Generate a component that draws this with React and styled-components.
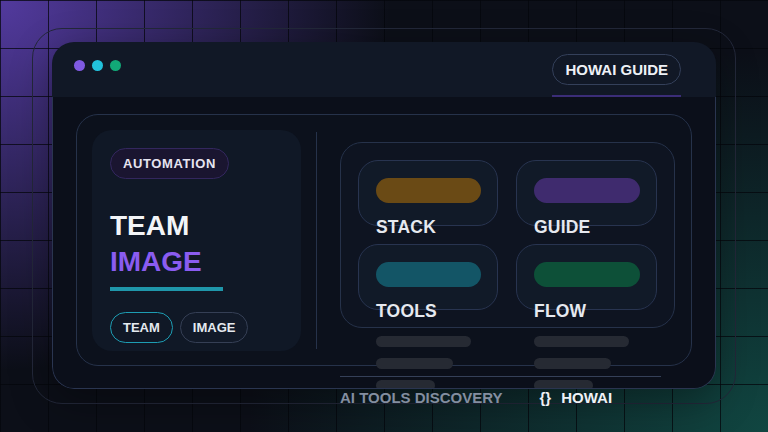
import React from "react";
import styled, { createGlobalStyle } from "styled-components";

const Global = createGlobalStyle`
  html, body { margin: 0; padding: 0; background: #0c0f18; }
  body { font-family: "Liberation Sans", Arial, sans-serif; }
  * { box-sizing: border-box; }
`;

const Stage = styled.div`
  position: relative;
  width: 768px;
  height: 432px;
  overflow: hidden;
  padding: 28px 32px;
  background:
    linear-gradient(to right, rgba(4, 6, 12, 0.75) 1px, transparent 1px) 0 0 / 48px 48px,
    linear-gradient(to bottom, rgba(4, 6, 12, 0.75) 1px, transparent 1px) 0 0 / 48px 48px,
    radial-gradient(ellipse 390px 370px at 0 0, rgba(112, 76, 215, 0.7), rgba(112, 76, 215, 0) 100%),
    radial-gradient(ellipse 520px 380px at 100% 100%, rgba(20, 110, 95, 0.58), rgba(20, 110, 95, 0) 100%),
    #0c0f18;
`;

const Ring = styled.div`
  width: 704px;
  height: 376px;
  border: 1px solid #23283a;
  border-radius: 30px;
  padding: 13px 19px 14px;
`;

const Window = styled.div`
  width: 664px;
  height: 347px;
  border-radius: 22px;
  overflow: hidden;
  display: flex;
  flex-direction: column;
  box-shadow: 0 12px 40px rgba(0, 0, 0, 0.35);
`;

const TopBar = styled.div`
  height: 55px;
  flex: none;
  background: #111826;
  display: flex;
  justify-content: space-between;
  padding: 0 35px 0 22px;
`;

const Dots = styled.div`
  display: flex;
  gap: 7px;
  margin-top: 18px;
`;

const Dot = styled.span`
  width: 11px;
  height: 11px;
  border-radius: 50%;
  background: ${(p) => p.$c};
`;

const TabWrap = styled.div`
  display: flex;
  align-items: flex-start;
  padding-top: 12px;
  border-bottom: 2px solid #3b2d78;
`;

const Pill = styled.span`
  display: inline-flex;
  flex: none;
  align-items: center;
  height: 31px;
  padding: 0 ${(p) => p.$px || 12}px;
  border-radius: 16px;
  border: 1px solid ${(p) => p.$border || "#34405a"};
  background: ${(p) => p.$bg || "transparent"};
  color: ${(p) => p.$color || "#eef1f6"};
  font-size: ${(p) => p.$size || 13}px;
  font-weight: 700;
  letter-spacing: ${(p) => p.$ls || 0}px;
  white-space: nowrap;
  line-height: 1;
`;

const Body = styled.div`
  flex: 1;
  background: #0b0f1a;
  border: 1px solid #2a3550;
  border-top: none;
  border-radius: 0 0 22px 22px;
  padding: 17px 23px 0 23px;
  overflow: hidden;
`;

const Panel = styled.div`
  width: 616px;
  height: 252px;
  border: 1px solid #26324a;
  border-radius: 22px;
  background: #0c111c;
  display: flex;
  padding: 15px 16px 14px 15px;
`;

const LeftCard = styled.div`
  width: 209px;
  height: 221px;
  flex: none;
  border-radius: 20px;
  background: #101826;
  padding: 18px 18px 0;
  display: flex;
  flex-direction: column;
  align-items: flex-start;
  & > * { flex-shrink: 0; }
`;

const Title = styled.h1`
  margin: 29px 0 0;
  font-size: 28px;
  line-height: 36px;
  font-weight: 700;
  color: #f3f5f8;
`;

const Accent = styled.span`
  display: block;
  color: #8a5cf0;
`;

const Underline = styled.div`
  width: 113px;
  height: 4px;
  margin-top: 7px;
  background: #1f96aa;
`;

const PillRow = styled.div`
  display: flex;
  gap: 7px;
  margin-top: 21px;
`;

const Divider = styled.div`
  width: 1px;
  flex: none;
  margin: 2px 23px 2px 15px;
  background: #26324a;
`;

const RightCol = styled.div`
  display: flex;
  flex-direction: column;
  padding-top: 12px;
  & > * { flex-shrink: 0; }
`;

const GridBox = styled.div`
  width: 335px;
  height: 186px;
  border: 1px solid #26324a;
  border-radius: 22px;
  background: #0e1421;
  padding: 17px;
  display: grid;
  grid-template-columns: 140px 141px;
  grid-template-rows: 66px 66px;
  gap: 18px;
`;

const Tile = styled.div`
  border: 1px solid #283450;
  border-radius: 20px;
  background: #111a28;
  padding: 17px 16px 0 17px;
`;

const ColorBar = styled.div`
  height: 25px;
  border-radius: 13px;
  background: ${(p) => p.$c};
`;

const TileLabel = styled.div`
  margin-top: 14px;
  font-size: 17.5px;
  line-height: 20px;
  font-weight: 700;
  letter-spacing: 0.2px;
  color: #e6e9ef;
  white-space: nowrap;
`;

const Lines = styled.div`
  display: grid;
  grid-template-columns: 158px 158px;
  padding: 8px 0 0 36px;
`;

const LineCol = styled.div`
  display: flex;
  flex-direction: column;
  gap: 11px;
`;

const GrayBar = styled.div`
  height: 11px;
  border-radius: 6px;
  background: #262a33;
`;

const Footer = styled.div`
  position: absolute;
  left: 340px;
  top: 376px;
  width: 321px;
  border-top: 1px solid #354058;
  padding-top: 12px;
  display: flex;
  font-size: 15px;
  line-height: 18px;
  font-weight: 700;
`;

const FooterMuted = styled.span`
  color: #838ea0;
  margin-right: 37px;
`;

const FooterBrand = styled.span`
  display: flex;
  gap: 10px;
  color: #eef1f6;
`;

const tiles = [
  { label: "STACK", c: "#6a4a15" },
  { label: "GUIDE", c: "#3f2b6e" },
  { label: "TOOLS", c: "#135566" },
  { label: "FLOW", c: "#0d5038" },
];

const barWidths = [95, 77, 59];

export default function App() {
  return (
    <>
      <Global />
      <Stage>
        <Ring>
          <Window>
            <TopBar>
              <Dots>
                <Dot $c="#7f5ae2" />
                <Dot $c="#22c1dc" />
                <Dot $c="#12a877" />
              </Dots>
              <TabWrap>
                <Pill $size={15} $bg="#111826">HOWAI GUIDE</Pill>
              </TabWrap>
            </TopBar>
            <Body>
              <Panel>
                <LeftCard>
                  <Pill $bg="#1a1530" $border="#33275e" $color="#e6e4f0" $ls={0.6}>
                    AUTOMATION
                  </Pill>
                  <Title>
                    TEAM
                    <Accent>IMAGE</Accent>
                  </Title>
                  <Underline />
                  <PillRow>
                    <Pill $border="#1d9db3" $color="#e4e9ef">TEAM</Pill>
                    <Pill $border="#353f55" $bg="#121a29" $color="#e4e9ef">IMAGE</Pill>
                  </PillRow>
                </LeftCard>
                <Divider />
                <RightCol>
                  <GridBox>
                    {tiles.map((t) => (
                      <Tile key={t.label}>
                        <ColorBar $c={t.c} />
                        <TileLabel>{t.label}</TileLabel>
                      </Tile>
                    ))}
                  </GridBox>
                  <Lines>
                    {[0, 1].map((col) => (
                      <LineCol key={col}>
                        {barWidths.map((w) => (
                          <GrayBar key={w} style={{ width: w }} />
                        ))}
                      </LineCol>
                    ))}
                  </Lines>
                </RightCol>
              </Panel>
            </Body>
          </Window>
        </Ring>
        <Footer>
          <FooterMuted>AI TOOLS DISCOVERY</FooterMuted>
          <FooterBrand>
            <span>{"{}"}</span>
            <span>HOWAI</span>
          </FooterBrand>
        </Footer>
      </Stage>
    </>
  );
}
